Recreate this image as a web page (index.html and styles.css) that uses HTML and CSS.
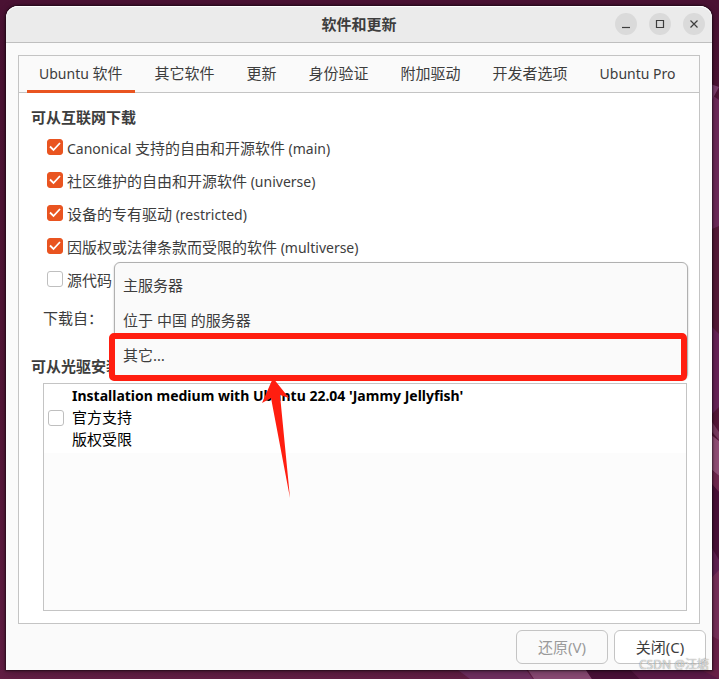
FILE: index.html
```html
<!DOCTYPE html>
<html lang="zh-CN">
<head>
    <meta charset="UTF-8">
    <meta name="viewport" content="width=device-width, initial-scale=1.0">
    <title>软件和更新</title>
    <link rel="stylesheet" href="styles.css">
</head>
<body>

    <!-- Wallpaper -->
    <svg class="wallpaper" viewBox="0 0 719 679" preserveAspectRatio="none" aria-hidden="true">
        <path fill="#6d2a5a" d="M705 90L719 100V228L705 235Z"/>
        <path fill="#7d3f6d" d="M705 82L719 87L712 100L705 110Z"/>
        <path fill="#561a38" d="M705 232L719 226V345L705 320Z"/>
        <path fill="#672358" d="M705 320L719 334V407L705 421Z"/>
        <path fill="#793b60" d="M705 412L719 432V440L705 424Z"/>
        <path fill="#935078" d="M705 430L719 441V476L705 464Z"/>
        <path fill="#70284f" d="M705 464L719 476V492L705 480Z"/>
        <path fill="#4a1038" d="M705 476L719 492V560L705 540Z"/>
        <path fill="#602052" d="M705 536L719 560V575L705 585Z"/>
        <path fill="#78305a" d="M705 585L719 570V640H705Z"/>
        <path fill="#6a2048" d="M705 632L719 640V679H640Z"/>
        <path fill="#6f2f60" d="M450 664L470 679H533L522 664Z"/>
        <path fill="#8a4a74" d="M524 664L534 679H592L582 664Z"/>
        <path fill="#4a1038" d="M582 664L592 679H640L625 664Z"/>
        <path fill="#5c1a48" d="M625 664L640 679H719L690 664Z"/>
    </svg>

    <div class="window">
        <header class="titlebar">
            <h1>软件和更新</h1>
            <div class="window-controls">
                <button aria-label="最小化">
                    <svg viewBox="0 0 22 22"><path d="M7 14.5h8"/></svg>
                </button>
                <button aria-label="最大化">
                    <svg viewBox="0 0 22 22"><path d="M7.5 7.5h7v7h-7z"/></svg>
                </button>
                <button aria-label="关闭窗口">
                    <svg viewBox="0 0 22 22"><path d="M7.5 7.5l7 7M14.5 7.5l-7 7"/></svg>
                </button>
            </div>
        </header>

        <main class="panel">
            <nav class="tabs">
                <button class="tab active"><span lang="en">Ubuntu </span>软件</button>
                <button class="tab">其它软件</button>
                <button class="tab">更新</button>
                <button class="tab">身份验证</button>
                <button class="tab">附加驱动</button>
                <button class="tab">开发者选项</button>
                <button class="tab"><span lang="en">Ubuntu Pro</span></button>
            </nav>

            <div class="content">
                <h2>可从互联网下载</h2>
                <div class="sources">
                    <label class="source"><input type="checkbox" checked><span><span lang="en">Canonical </span>支持的自由和开源软件<span lang="en"> (main)</span></span></label>
                    <label class="source"><input type="checkbox" checked><span>社区维护的自由和开源软件<span lang="en"> (universe)</span></span></label>
                    <label class="source"><input type="checkbox" checked><span>设备的专有驱动<span lang="en"> (restricted)</span></span></label>
                    <label class="source"><input type="checkbox" checked><span>因版权或法律条款而受限的软件<span lang="en"> (multiverse)</span></span></label>
                    <label class="source"><input type="checkbox"><span>源代码</span></label>
                </div>

                <div class="server">
                    <span id="server-label">下载自：</span>
                    <div class="menu" role="listbox" aria-labelledby="server-label">
                        <button role="option">主服务器</button>
                        <button role="option">位于 中国 的服务器</button>
                        <button role="option">其它…</button>
                        <div class="highlight"></div>
                        <svg class="arrow" viewBox="0 0 28 120" aria-hidden="true">
                            <path d="M11 0L27 20L18 17L28 120L9 20L0 25Z"/>
                        </svg>
                    </div>
                </div>

                <h2 class="cdrom-title">可从光驱安装</h2>
                <div class="cdrom">
                    <label class="medium">
                        <input type="checkbox">
                        <span class="medium-text">
                            <b>Installation medium with Ubuntu 22.04 'Jammy Jellyfish'</b>
                            <span>官方支持</span>
                            <span>版权受限</span>
                        </span>
                    </label>
                </div>
            </div>
        </main>

        <footer class="actions">
            <button disabled>还原(V)</button>
            <button>关闭(C)</button>
        </footer>
    </div>

    <div class="watermark">CSDN @汪塘</div>

</body>
</html>
```

FILE: styles.css
```css
* {
    box-sizing: border-box;
}

body {
    margin: 0;
    padding: 6px 7px 9px 6px;
    min-height: 100vh;
    display: flex;
    position: relative;
    background: linear-gradient(#4a1233, #541637 60%, #621e44);
    font-family: "Noto Sans", "Noto Sans CJK SC", sans-serif;
    font-size: 15px;
    line-height: 22px;
    color: #3d3d3d;
}

button {
    font: inherit;
    color: inherit;
    border: none;
    background: none;
    padding: 0;
}

h1, h2 {
    margin: 0;
    font-size: 15px;
    font-weight: bold;
}

/* Latin text runs a little large next to the Chinese */
span[lang="en"] {
    font-size: 14px;
}

.wallpaper {
    position: absolute;
    inset: 0;
    width: 100%;
    height: 100%;
}

.window {
    position: relative;
    flex: 1;
    min-width: 0;
    display: flex;
    flex-direction: column;
    background: #fafafa;
    border-radius: 12px 12px 0 0;
    box-shadow: 0 0 2px 1px rgba(0, 0, 0, 0.5), 0 2px 8px rgba(0, 0, 0, 0.3);
}

/* Title bar */
.titlebar {
    display: grid;
    grid-template-columns: 1fr auto 1fr;
    align-items: center;
    height: 37px;
    padding: 0 7px;
    background: #ebebeb;
    border-bottom: 1px solid #bfbfbf;
    border-radius: 12px 12px 0 0;
    box-shadow: inset 0 1px #fff;
}

.titlebar h1 {
    grid-column: 2;
}

.window-controls {
    display: flex;
    justify-content: flex-end;
    gap: 12px;
}

.window-controls button {
    width: 22px;
    height: 22px;
    border-radius: 50%;
    background: #dadada;
}

.window-controls svg {
    display: block;
    fill: none;
    stroke: #3d3d3d;
    stroke-width: 1.2;
}

/* Tabs */
.panel {
    flex: 1;
    display: flex;
    flex-direction: column;
    margin: 12px 12px 0;
    background: #fff;
    border: 1px solid #c4c4c4;
}

.tabs {
    display: flex;
    gap: 8px;
    height: 37px;
    padding: 0 8px;
    background: #fafafa;
    border-bottom: 1px solid #c4c4c4;
}

.tab {
    height: 37px;
    padding: 0 12px;
    border-bottom: 3px solid transparent;
    white-space: nowrap;
}

.tab.active {
    border-bottom-color: #e95420;
}

/* Content */
.content {
    flex: 1;
    display: flex;
    flex-direction: column;
    padding: 13px 12px 12px;
}

.sources {
    display: flex;
    flex-direction: column;
    gap: 11px;
    padding: 9px 0 0 16px;
}

.source {
    display: flex;
    align-items: center;
    gap: 4px;
    height: 22px;
}

input[type="checkbox"] {
    appearance: none;
    flex: none;
    width: 16px;
    height: 16px;
    margin: 0;
    background: #fff;
    border: 1px solid #bfbfbf;
    border-radius: 3px;
}

.source input[type="checkbox"] {
    margin-bottom: 2px;
}

input[type="checkbox"]:checked {
    border-color: #e95420;
    background: #e95420 url("data:image/svg+xml,%3Csvg xmlns='http://www.w3.org/2000/svg' viewBox='0 0 14 14'%3E%3Cpath d='M2 6.5l3.5 3.5 6.5-7' fill='none' stroke='white' stroke-width='1.8'/%3E%3C/svg%3E");
}

.server {
    position: relative;
    margin-top: 16px;
    padding-left: 12px;
}

/* Open drop-down list, over the page */
.menu {
    position: absolute;
    top: -45px;
    left: 83px;
    right: -1px;
    display: flex;
    flex-direction: column;
    padding: 4px 0 6px;
    background: #fafafa;
    border: 1px solid #b0b0b0;
    border-radius: 6px;
    box-shadow: 0 1px 2px rgba(0, 0, 0, 0.25);
}

.menu button {
    height: 35px;
    padding: 0 8px;
    text-align: left;
}

.highlight {
    position: absolute;
    left: -6px;
    right: 0;
    bottom: -3px;
    height: 48px;
    border: 6px solid #ff1e10;
    border-radius: 5px;
}

.arrow {
    position: absolute;
    top: 115px;
    left: 147px;
    width: 28px;
    height: 120px;
    fill: #ff1e10;
}

.cdrom-title {
    margin-top: 26px;
}

.cdrom {
    flex: 1;
    margin: 6px 0 0 12px;
    background: #fcfcfc;
    border: 1px solid #c4c4c4;
}

.medium {
    display: flex;
    align-items: center;
    gap: 8px;
    padding: 1px 4px 3px;
    background: #fff;
    color: #000;
}

.medium-text {
    display: flex;
    flex-direction: column;
}

.medium b {
    font-size: 14px;
    line-height: 21px;
}

/* Bottom buttons */
.actions {
    display: flex;
    justify-content: flex-end;
    gap: 6px;
    padding: 6px;
}

.actions button {
    width: 92px;
    height: 34px;
    background: #fff;
    border: 1px solid #c4c4c4;
    border-radius: 6px;
}

.actions button:disabled {
    background: #fafafa;
    color: #9a9a9a;
}

.watermark {
    position: absolute;
    right: 10px;
    bottom: 3px;
    font-size: 12px;
    color: rgba(255, 255, 255, 0.7);
    text-shadow: 0 0 1px rgba(0, 0, 0, 0.6);
}
```
